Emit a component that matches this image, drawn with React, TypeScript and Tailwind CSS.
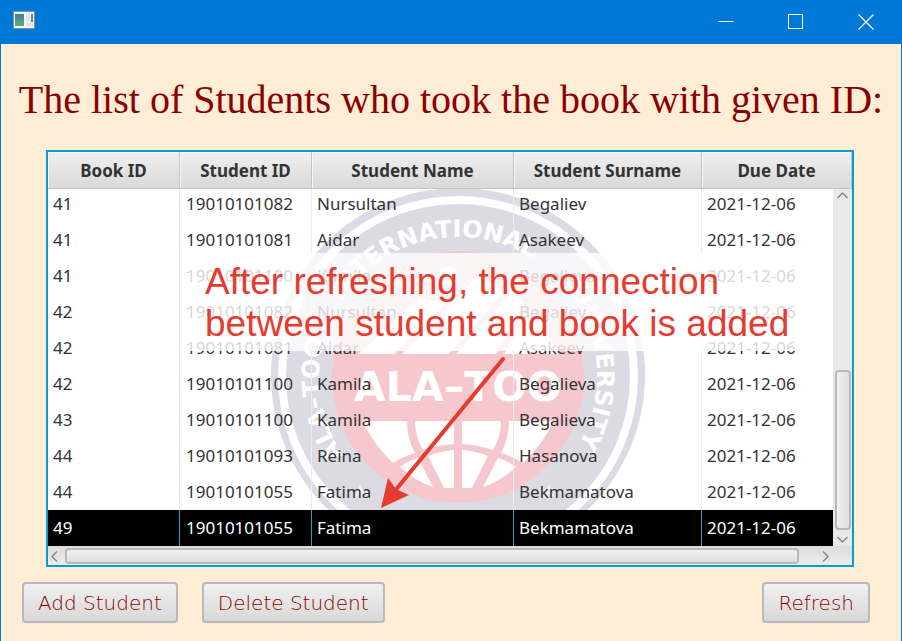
type Row = [string, string, string, string, string];

const columns = ["Book ID", "Student ID", "Student Name", "Student Surname", "Due Date"];

const rows: Row[] = [
  ["41", "19010101082", "Nursultan", "Begaliev", "2021-12-06"],
  ["41", "19010101081", "Aidar", "Asakeev", "2021-12-06"],
  ["41", "19010101100", "Kamila", "Begalieva", "2021-12-06"],
  ["42", "19010101082", "Nursultan", "Begaliev", "2021-12-06"],
  ["42", "19010101081", "Aidar", "Asakeev", "2021-12-06"],
  ["42", "19010101100", "Kamila", "Begalieva", "2021-12-06"],
  ["43", "19010101100", "Kamila", "Begalieva", "2021-12-06"],
  ["44", "19010101093", "Reina", "Hasanova", "2021-12-06"],
  ["44", "19010101055", "Fatima", "Bekmamatova", "2021-12-06"],
  ["49", "19010101055", "Fatima", "Bekmamatova", "2021-12-06"],
];

const selected = rows.length - 1;

function TitleBar() {
  return (
    <header className="flex h-11 items-center justify-between bg-[#0078d7] pl-3">
      <svg width="22" height="18" viewBox="0 0 22 18" aria-hidden="true" className="mb-1">
        <defs>
          <linearGradient id="pane" x1="0" y1="0" x2="0" y2="1">
            <stop offset="0" stopColor="#3f7f9c" />
            <stop offset="1" stopColor="#5fae78" />
          </linearGradient>
        </defs>
        <rect x="0.5" y="0.5" width="21" height="17" fill="#f3f3f3" stroke="#7d93a3" />
        <rect x="2" y="3" width="9" height="12" fill="url(#pane)" />
        <rect x="13" y="3" width="4" height="7" fill="#e2e5e7" />
        <rect x="13" y="12" width="7" height="3" fill="#e2e5e7" />
        <path d="M18 3h2v8h-2z" fill="#4b9488" />
      </svg>
      <div className="flex h-full">
        <button type="button" aria-label="Minimize" className="flex w-[70px] items-center justify-center">
          <svg width="16" height="16" className="mb-px">
            <path d="M0.5 7.5h15" stroke="#fff" />
          </svg>
        </button>
        <button type="button" aria-label="Maximize" className="flex w-[70px] items-center justify-center">
          <svg width="16" height="16" className="mb-px">
            <rect x="0.5" y="0.5" width="14" height="14" fill="none" stroke="#fff" />
          </svg>
        </button>
        <button type="button" aria-label="Close" className="flex w-[70px] items-center justify-center">
          <svg width="16" height="16" className="mb-px">
            <path d="M0.5 0.5l15 15M15.5 0.5l-15 15" stroke="#fff" strokeWidth="1.2" />
          </svg>
        </button>
      </div>
    </header>
  );
}

function GlobeHalf() {
  return (
    <g fill="#fff">
      <path d="M362 421H407Q407 439 415 453Q402 457 393 463Q374 445 362 421Z" />
      <path d="M415 421H454V444Q437 445 423 450Q415 437 415 421Z" />
      <path d="M400 467Q408 461 418 458L433 487Q415 481 400 467Z" />
      <path d="M428 456Q440 451 454 450V488H444Z" />
    </g>
  );
}

function Emblem() {
  return (
    <svg
      className="absolute left-[217px] top-9"
      width="390"
      height="358"
      viewBox="265 188 390 358"
      aria-hidden="true"
    >
      <defs>
        <path id="ring" d="M458 515A139 139 0 1 1 458 237A139 139 0 1 1 458 515" />
      </defs>
      <circle cx="458" cy="375" r="187" fill="#dcdbe4" />
      <circle cx="458" cy="376" r="176" fill="none" stroke="#fff" strokeWidth="8" />
      <circle cx="458" cy="377" r="126" fill="#f6c8cd" />
      <g fill="#fff" fontFamily="'DejaVu Sans', sans-serif" fontWeight="700">
        <g fontSize="24" textAnchor="middle">
          <text>
            <textPath href="#ring" startOffset="22.3%">ALA–TOO</textPath>
          </text>
          <text>
            <textPath href="#ring" startOffset="46.5%">INTERNATIONAL</textPath>
          </text>
          <text>
            <textPath href="#ring" startOffset="74%">UNIVERSITY</textPath>
          </text>
        </g>
        <text x="458" y="401" fontSize="41" textAnchor="middle">
          ALA–TOO
        </text>
      </g>
      <g fill="#fff">
        <circle cx="448" cy="276" r="9" />
        <path d="M358 354L420 298L438 302L444 306L394 354Z" />
        <path d="M402 354L476 278L506 290L448 354Z" />
        <path d="M456 354L512 292L524 302L496 354Z" />
        <path d="M504 354L532 308L558 354Z" />
        <path d="M360 484l2 5h5l-4 3 2 5-5-3-5 3 2-5-4-3h5zM549 484l2 5h5l-4 3 2 5-5-3-5 3 2-5-4-3h5z" opacity="0.6" />
      </g>
      <GlobeHalf />
      <g transform="translate(916 0) scale(-1 1)">
        <GlobeHalf />
      </g>
    </svg>
  );
}

function Annotation() {
  return (
    <>
      <p className="absolute left-[140px] top-[101px] z-20 h-[98px] w-[620px] whitespace-nowrap bg-white/80 pl-[17px] pt-2 font-['Liberation_Sans',sans-serif] text-[37px] leading-[42px] text-[#e63b2f]">
        After refreshing, the connection
        <br />
        between student and book is added
      </p>
      <svg
        className="absolute left-[322px] top-[198px] z-20"
        width="150"
        height="162"
        viewBox="370 350 150 162"
        aria-hidden="true"
      >
        <path d="M503 359L394 492" stroke="#e63b2f" strokeWidth="4" strokeLinecap="round" />
        <path d="M381 508L388 478L396 489L409 495Z" fill="#e63b2f" />
      </svg>
    </>
  );
}

function Chevron({ d }: { d: string }) {
  return (
    <svg width="13" height="13" viewBox="0 0 13 13" fill="none" stroke="#888" strokeWidth="1.5">
      <path d={d} />
    </svg>
  );
}

function StudentTable() {
  return (
    <section className="border-2 border-[#039ed3] bg-white">
      <div className="relative overflow-hidden">
        <Emblem />
        <table className="relative z-10 w-full table-fixed border-separate border-spacing-0 font-['Noto_Sans',sans-serif] text-[17px] leading-6 text-[#333]">
          <colgroup>
            <col className="w-[132px]" />
            <col className="w-[132px]" />
            <col className="w-[202px]" />
            <col className="w-[188px]" />
            <col />
          </colgroup>
          <thead>
            <tr>
              {columns.map((name) => (
                <th
                  key={name}
                  scope="col"
                  className="h-[37px] border-r border-b border-[#c3c3c3] bg-linear-to-b from-[#f0f0f0] to-[#d9d9d9] p-0 pt-px text-center font-bold shadow-[inset_1px_1px_0_#f8f8f8]"
                >
                  {name}
                </th>
              ))}
            </tr>
          </thead>
          <tbody>
            {rows.map((row, i) => (
              <tr key={i} className={i === selected ? "bg-black text-white" : ""}>
                {row.map((value, j) => (
                  <td
                    key={j}
                    className={`border-r py-0 pr-0 ${j === 1 ? "pl-1.5" : "pl-[5px]"} ${
                      i === 0 ? "h-[33px] pb-[3px]" : "h-9"
                    } ${i === selected ? "border-[#2a9cc4]" : "border-[#ececec]"}`}
                  >
                    {value}
                  </td>
                ))}
              </tr>
            ))}
          </tbody>
        </table>
        <div className="absolute top-[37px] right-0 bottom-0 z-10 flex w-[19px] flex-col items-center bg-[#e9e9e9]">
          <button type="button" aria-label="Scroll up">
            <Chevron d="M1.5 9l5-5 5 5" />
          </button>
          <div className="flex w-4 grow flex-col justify-end">
            <div className="h-[160px] rounded border-2 border-[#b9b9b9] bg-linear-to-r from-[#f2f2f2] to-[#dedede]" />
          </div>
          <button type="button" aria-label="Scroll down" className="pt-[3px]">
            <Chevron d="M1.5 4l5 5 5-5" />
          </button>
        </div>
        <Annotation />
      </div>
      <div className="flex h-[19px] items-center bg-linear-to-b from-[#dcdcdc] to-[#ececec] pt-px pr-5">
        <button type="button" aria-label="Scroll left" className="w-[17px]">
          <Chevron d="M9 1.5l-5 5 5 5" />
        </button>
        <div className="grow pr-5">
          <div className="h-4 rounded border-2 border-[#b9b9b9] bg-linear-to-b from-[#f2f2f2] to-[#dedede]" />
        </div>
        <button type="button" aria-label="Scroll right" className="w-[13px]">
          <Chevron d="M4 1.5l5 5-5 5" />
        </button>
      </div>
    </section>
  );
}

function ActionButton({ label }: { label: string }) {
  return (
    <button
      type="button"
      className="h-[41px] rounded border-2 border-[#b9b9b9] bg-linear-to-b from-[#f0f0f0] to-[#d9d9d9] px-[14px] font-['DejaVu_Sans',sans-serif] text-[20px] leading-6 font-extralight text-[#8b0000]"
    >
      {label}
    </button>
  );
}

export default function App() {
  return (
    <div className="min-h-screen border-x border-[#0078d7] bg-[#ffeed5]">
      <TitleBar />
      <main>
        <h1 className="flex h-[106px] items-center justify-center pt-1.5 font-['Liberation_Serif',serif] text-[40px] whitespace-nowrap text-[#8b0000]">
          The list of Students who took the book with given ID:
        </h1>
        <div className="pr-[47px] pl-[45px]">
          <StudentTable />
        </div>
        <div className="flex items-center gap-6 pt-[15px] pr-[31px] pl-[21px]">
          <ActionButton label="Add Student" />
          <ActionButton label="Delete Student" />
          <div className="ml-auto">
            <ActionButton label="Refresh" />
          </div>
        </div>
      </main>
    </div>
  );
}
